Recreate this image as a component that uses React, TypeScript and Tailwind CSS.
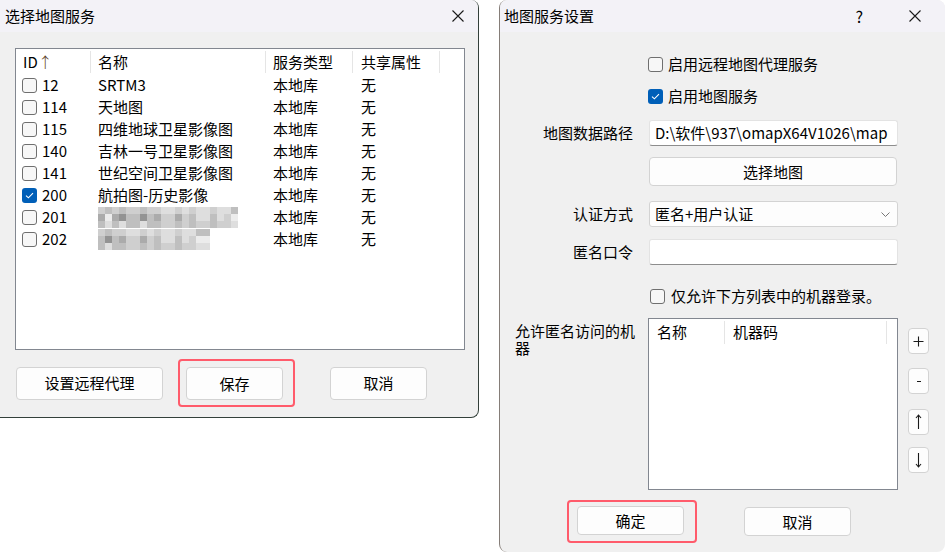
import React from 'react';

const rows = [
    { id: '12', name: 'SRTM3', checked: false },
    { id: '114', name: '天地图', checked: false },
    { id: '115', name: '四维地球卫星影像图', checked: false },
    { id: '140', name: '吉林一号卫星影像图', checked: false },
    { id: '141', name: '世纪空间卫星影像图', checked: false },
    { id: '200', name: '航拍图-历史影像', checked: true },
    { id: '201', name: '', blur: 20, checked: false },
    { id: '202', name: '', blur: 16, checked: false },
];

const grays = [
    'bg-[#ececec]',
    'bg-[#dedede]',
    'bg-[#cfcfcf]',
    'bg-[#bfbfbf]',
    'bg-[#ababab]',
    'bg-[#939393]',
];

const CloseIcon = () => (
    <svg width="12" height="12" viewBox="0 0 12 12" className="block">
        <path d="M0.5 0.5 L11.5 11.5 M11.5 0.5 L0.5 11.5" stroke="#1a1a1a" strokeWidth="1.1" fill="none" />
    </svg>
);

const CheckBox = ({ checked }: { checked?: boolean }) =>
    checked ? (
        <div className="w-[15px] h-[15px] rounded-[3px] bg-[#005fb8] flex items-center justify-center shrink-0">
            <svg width="9" height="7" viewBox="0 0 9 7">
                <path d="M1 3.6 L3.4 5.8 L8 1.2" stroke="white" strokeWidth="1.1" fill="none" />
            </svg>
        </div>
    ) : (
        <div className="w-[15px] h-[15px] rounded-[3px] border border-[#6f6f6f] bg-[#f7f7f7] shrink-0" />
    );

const Btn = ({ children, className }: { children: React.ReactNode; className: string }) => (
    <div className={`flex items-center justify-center bg-[#fdfdfd] border border-[#d3d3d3] rounded-[4px] text-black ${className}`}>
        {children}
    </div>
);

// mosaic stand-in for the pixelated names
const Mosaic = ({ cols, seed }: { cols: number; seed: number }) => (
    <div className="flex flex-col">
        {[0, 1, 2].map(r => (
            <div key={r} className="flex">
                {Array.from({ length: cols }).map((_, c) => {
                    const v = (c * 7 + r * 13 + seed * 5 + ((c * c) % 5)) % 6;
                    const idx = r === 1 ? Math.min(5, v) : Math.min(3, Math.floor(v / 2) + 1);
                    return <div key={c} className={`w-[7px] h-[7px] ${grays[idx]}`} />;
                })}
            </div>
        ))}
    </div>
);

const Header = ({ label, cls, sep = true }: { label: React.ReactNode; cls: string; sep?: boolean }) => (
    <div className={`relative h-full flex items-center ${cls}`}>
        {label}
        {sep && <div className="absolute right-0 top-[2px] bottom-[1px] w-px bg-[#e5e5e5]" />}
    </div>
);

const LeftDialog = () => (
    <div className="w-[479px] h-[418px] shrink-0 flex flex-col bg-[#f0f0f0] border-r border-b border-[#33403a] rounded-tr-[8px] rounded-br-[8px] overflow-hidden">
        <div className="h-[32px] bg-[#f3f2f7] flex items-center justify-between pl-[5px] pr-[14px]">
            <span>选择地图服务</span>
            <CloseIcon />
        </div>
        <div className="pl-[15px] pt-[16px]">
            <div className="w-[450px] h-[302px] bg-white border border-[#828790]">
                <div className="h-[25px] flex">
                    <Header cls="w-[75px] pl-[7px]" label={<span>ID<span className="text-[#5a3a20] font-light">↑</span></span>} />
                    <Header cls="w-[175px] pl-[7px]" label="名称" />
                    <Header cls="w-[87px] pl-[7px]" label="服务类型" />
                    <Header cls="w-[87px] pl-[8px]" label="共享属性" />
                </div>
                {rows.map(r => (
                    <div key={r.id} className="h-[22px] flex items-center">
                        <div className="w-[75px] pl-[6px] flex items-center gap-[5px]">
                            <CheckBox checked={r.checked} />
                            <span>{r.id}</span>
                        </div>
                        <div className="w-[175px] pl-[7px] flex items-center">
                            {r.blur ? (
                                <div className="blur-[0.6px]">
                                    <Mosaic cols={r.blur} seed={Number(r.id)} />
                                </div>
                            ) : (
                                r.name
                            )}
                        </div>
                        <div className="w-[87px] pl-[7px]">本地库</div>
                        <div className="w-[87px] pl-[8px]">无</div>
                    </div>
                ))}
            </div>
            <div className="flex items-center mt-[9px] pl-[1px]">
                <Btn className="w-[147px] h-[33px]">设置远程代理</Btn>
                <div className="ml-[15px] border-2 border-[#ff5b6b] rounded-[4px] pl-[6px] pr-[10px] pt-[6px] pb-[5px]">
                    <Btn className="w-[97px] h-[33px]">保存</Btn>
                </div>
                <Btn className="ml-[35px] w-[97px] h-[33px]">取消</Btn>
            </div>
        </div>
    </div>
);

const Label = ({ children }: { children: React.ReactNode }) => (
    <div className="w-[149px] shrink-0 text-right pr-[16px]">{children}</div>
);

const SideBtn = ({ children, className }: { children: React.ReactNode; className: string }) => (
    <div className={`w-[21px] h-[26px] flex items-center justify-center bg-[#fdfdfd] border border-[#d3d3d3] rounded-[4px] ${className}`}>
        {children}
    </div>
);

const Arrow = ({ up }: { up?: boolean }) => (
    <svg width="7" height="16" viewBox="0 0 7 16">
        {up ? (
            <path d="M3.5 1 V15 M1 4 L3.5 1 L6 4" stroke="#1a1a1a" strokeWidth="1.1" fill="none" />
        ) : (
            <path d="M3.5 1 V15 M1 12 L3.5 15 L6 12" stroke="#1a1a1a" strokeWidth="1.1" fill="none" />
        )}
    </svg>
);

const RightDialog = () => (
    <div className="ml-[20px] w-[446px] h-[552px] shrink-0 flex flex-col bg-[#f0f0f0] border-l border-[#857d78] rounded-[8px] overflow-hidden">
        <div className="h-[32px] bg-[#f3f2f7] flex items-center pl-[4px] pr-[24px]">
            <span className="flex-1">地图服务设置</span>
            <span className="mr-[46px] text-[16px]">?</span>
            <CloseIcon />
        </div>
        <div className="flex flex-col">
            <div className="mt-[21px] h-[22px] flex items-center gap-[5px] pl-[148px]">
                <CheckBox />
                <span>启用远程地图代理服务</span>
            </div>
            <div className="mt-[10px] h-[22px] flex items-center gap-[5px] pl-[148px]">
                <CheckBox checked />
                <span>启用地图服务</span>
            </div>
            <div className="mt-[13px] flex items-center">
                <Label>地图数据路径</Label>
                <div className="w-[249px] h-[26px] bg-white border border-[#e3e3e3] border-b-[#8d8d8d] rounded-[3px] flex items-center pl-[5px] whitespace-nowrap overflow-hidden">
                    D:\软件\937\omapX64V1026\map
                </div>
            </div>
            <div className="mt-[11px] pl-[149px]">
                <Btn className="w-[248px] h-[29px]">选择地图</Btn>
            </div>
            <div className="mt-[15px] flex items-center">
                <Label>认证方式</Label>
                <div className="w-[249px] h-[26px] bg-[#fdfdfd] border border-[#d3d3d3] rounded-[3px] flex items-center justify-between pl-[5px] pr-[7px]">
                    <span>匿名+用户认证</span>
                    <svg width="9" height="5" viewBox="0 0 9 5">
                        <path d="M0.5 0.5 L4.5 4.5 L8.5 0.5" stroke="#777" strokeWidth="1" fill="none" />
                    </svg>
                </div>
            </div>
            <div className="mt-[12px] flex items-center">
                <Label>匿名口令</Label>
                <div className="w-[249px] h-[26px] bg-white border border-[#e3e3e3] border-b-[#8d8d8d] rounded-[3px]" />
            </div>
            <div className="mt-[20px] h-[22px] flex items-center gap-[6px] pl-[150px]">
                <CheckBox />
                <span>仅允许下方列表中的机器登录。</span>
            </div>
            <div className="mt-[11px] flex items-start">
                <div className="w-[148px] shrink-0 pl-[15px] pr-[13px] pt-[4px] leading-[17px]">允许匿名访问的机器</div>
                <div className="w-[250px] h-[172px] bg-white border border-[#828790]">
                    <div className="h-[26px] flex">
                        <Header cls="w-[76px] pl-[8px]" label="名称" />
                        <Header cls="w-[162px] pl-[8px]" label="机器码" />
                    </div>
                </div>
                <div className="ml-[10px] flex flex-col">
                    <SideBtn className="mt-[10px]">
                        <svg width="11" height="11" viewBox="0 0 11 11">
                            <path d="M5.5 0.5 V10.5 M0.5 5.5 H10.5" stroke="#1a1a1a" strokeWidth="1.1" fill="none" />
                        </svg>
                    </SideBtn>
                    <SideBtn className="mt-[14px]">
                        <div className="w-[4px] h-px bg-[#1a1a1a]" />
                    </SideBtn>
                    <SideBtn className="mt-[15px]">
                        <Arrow up />
                    </SideBtn>
                    <SideBtn className="mt-[12px]">
                        <Arrow />
                    </SideBtn>
                </div>
            </div>
            <div className="mt-[10px] flex items-center pl-[67px]">
                <div className="border-2 border-[#ff5b6b] rounded-[4px] pl-[8px] pr-[11px] pt-[4px] pb-[6px]">
                    <Btn className="w-[107px] h-[29px]">确定</Btn>
                </div>
                <Btn className="ml-[47px] w-[107px] h-[29px]">取消</Btn>
            </div>
        </div>
    </div>
);

export default function App() {
    return (
        <div className="w-[945px] h-[554px] bg-white flex items-start overflow-hidden text-[15px] leading-[20px] text-black font-['Noto_Sans_CJK_SC','Microsoft_YaHei',sans-serif]">
            <LeftDialog />
            <RightDialog />
        </div>
    );
}
